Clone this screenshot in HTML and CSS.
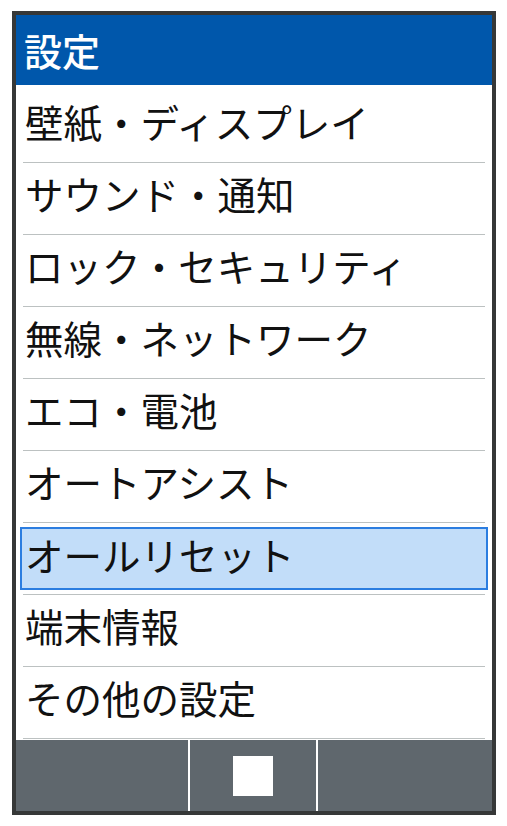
FILE: index.html
```html
<!DOCTYPE html>
<html lang="ja">
<head>
    <meta charset="UTF-8">
    <meta name="viewport" content="width=device-width, initial-scale=1.0">
    <title>設定</title>
    <link rel="stylesheet" href="styles.css">
</head>
<body>

<div class="phone">
    <!-- Title bar -->
    <div class="title-bar">設定</div>

    <!-- Settings menu -->
    <ul class="menu">
        <li class="menu-item"><span class="label">壁紙・ディスプレイ</span></li>
        <li class="menu-item"><span class="label">サウンド・通知</span></li>
        <li class="menu-item"><span class="label">ロック・セキュリティ</span></li>
        <li class="menu-item"><span class="label">無線・ネットワーク</span></li>
        <li class="menu-item"><span class="label">エコ・電池</span></li>
        <li class="menu-item"><span class="label">オートアシスト</span></li>
        <li class="menu-item selected"><span class="label">オールリセット</span></li>
        <li class="menu-item"><span class="label">端末情報</span></li>
        <li class="menu-item"><span class="label">その他の設定</span></li>
    </ul>

    <!-- Soft keys -->
    <div class="soft-keys">
        <div class="soft-key"></div>
        <div class="soft-key center"><span class="ok-icon"></span></div>
        <div class="soft-key"></div>
    </div>
</div>

</body>
</html>
```

FILE: styles.css
```css
* {
    box-sizing: border-box;
    margin: 0;
    padding: 0;
}

body {
    font-family: 'Noto Sans CJK JP', 'Noto Sans', sans-serif;
    background-color: #fff;
    color: #111;
    padding: 11px 0 0 12px;
}

.phone {
    width: 484px;
    height: 804px;
    border: 4px solid #363838;
    display: flex;
    flex-direction: column;
    background-color: #fff;
}

.title-bar {
    height: 70px;
    background-color: #0057ab;
    color: #fff;
    font-size: 38px;
    font-weight: 500;
    line-height: 70px;
    padding: 0 0 6px 8px;
}

.menu {
    list-style: none;
    padding: 6px 0 1px;
}

.menu-item {
    height: 72px;
    margin: 0 7px;
    border-bottom: 1px solid #bcc1c1;
    display: flex;
    align-items: center;
}

.label {
    font-size: 38.5px;
    line-height: 1;
    padding: 0 0 10px 2px;
    white-space: nowrap;
}

.menu-item.selected .label {
    flex: 1;
    align-self: stretch;
    display: flex;
    align-items: center;
    margin: 4px -3px 4px;
    padding-left: 3px;
    padding-bottom: 8px;
    background-color: #c2ddf9;
    border: 2px solid #2b7de0;
}

.soft-keys {
    flex: 1;
    display: flex;
    background-color: #5f676d;
}

.soft-key {
    width: 172px;
}

.soft-key.center {
    width: 130px;
    border-left: 2px solid #fff;
    border-right: 2px solid #fff;
    display: flex;
    align-items: center;
    justify-content: center;
}

.ok-icon {
    width: 40px;
    height: 40px;
    background-color: #fff;
    margin-top: 1px;
}
```
